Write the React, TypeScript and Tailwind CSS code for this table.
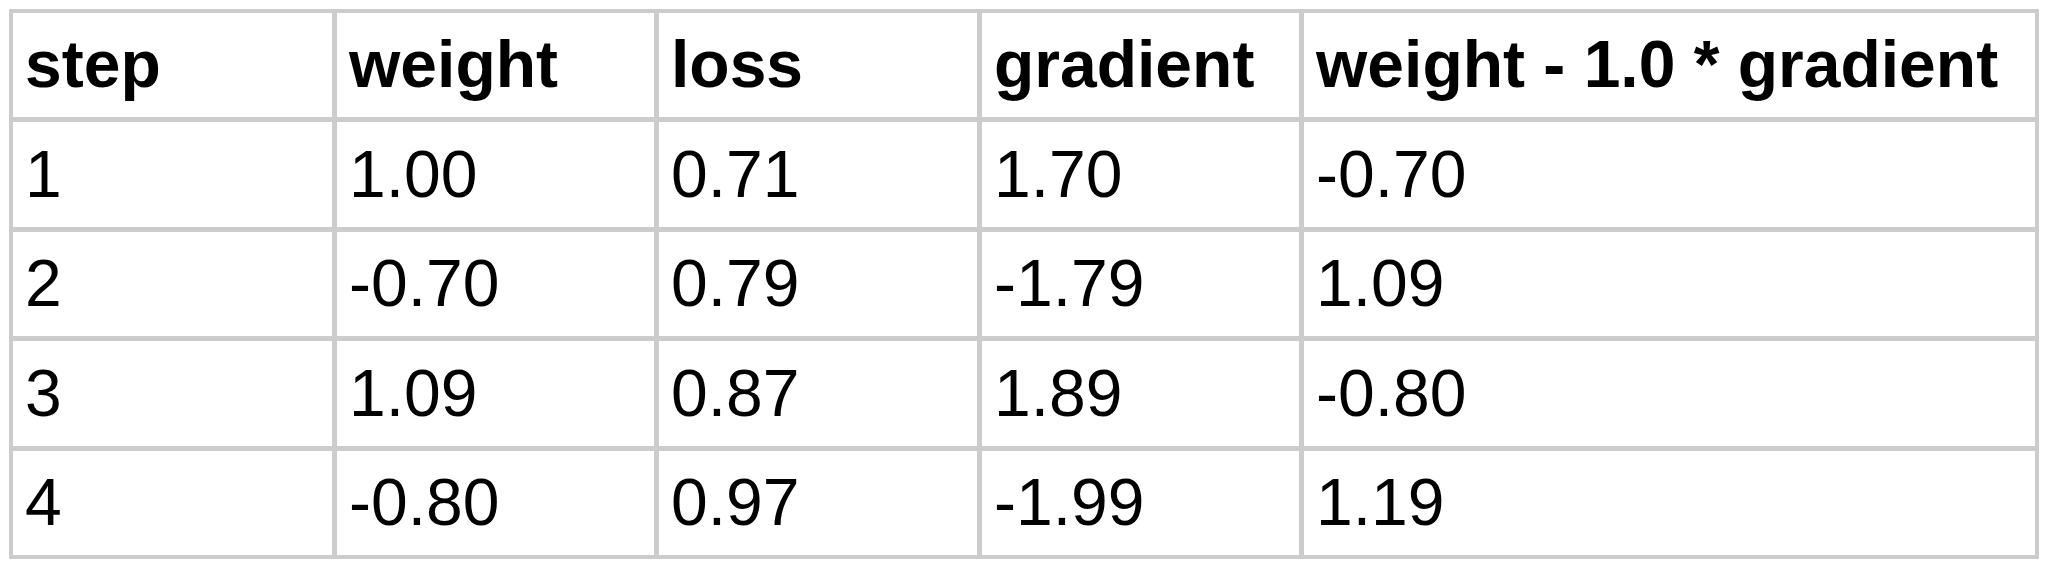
import React from "react";

const headers = ["step", "weight", "loss", "gradient", "weight - 1.0 * gradient"];

const rows: string[][] = [
  ["1", "1.00", "0.71", "1.70", "-0.70"],
  ["2", "-0.70", "0.79", "-1.79", "1.09"],
  ["3", "1.09", "0.87", "1.89", "-0.80"],
  ["4", "-0.80", "0.97", "-1.99", "1.19"],
];

const Cell = ({ text, bold }: { text: string; bold?: boolean }) => (
  <div
    className={`flex items-center bg-white px-[12px] pb-[2px] text-[66px] leading-none text-black whitespace-nowrap ${
      bold ? "font-bold" : "font-normal"
    }`}
  >
    {text}
  </div>
);

const App = () => {
  return (
    <div className="w-[2048px] h-[572px] bg-white pl-[9px] pt-[9px] font-['Liberation_Sans',Arial,sans-serif]">
      <div className="grid w-[2030px] grid-cols-[319px_317px_318px_317px_1fr] grid-rows-[104px_105px_104px_105px_104px] gap-[5px] bg-[#cccccc] p-[4px]">
        {headers.map((h) => (
          <Cell key={h} text={h} bold />
        ))}
        {rows.map((row, i) =>
          row.map((value, j) => <Cell key={`${i}-${j}`} text={value} />)
        )}
      </div>
    </div>
  );
};

export default App;
